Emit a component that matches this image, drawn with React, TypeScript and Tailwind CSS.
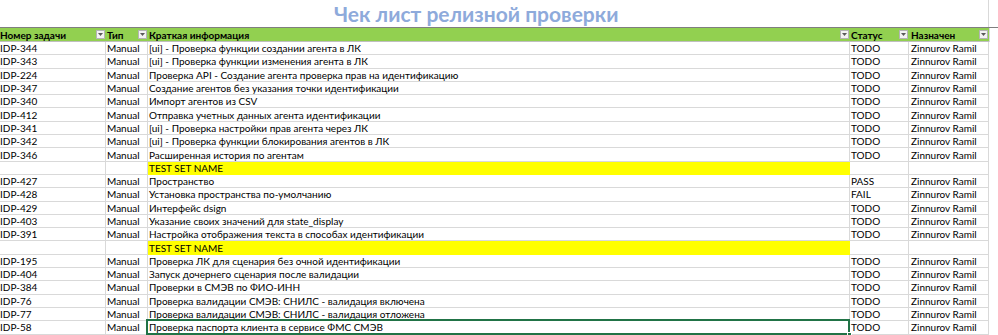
type Row = {
  id?: string
  type?: string
  info: string
  status?: string
  owner?: string
  section?: boolean
  selected?: boolean
}

const rows: Row[] = [
  { id: "IDP-344", type: "Manual", info: "[ui] - Проверка функции создании агента в ЛК", status: "TODO", owner: "Zinnurov Ramil" },
  { id: "IDP-343", type: "Manual", info: "[ui] - Проверка функции изменения агента в ЛК", status: "TODO", owner: "Zinnurov Ramil" },
  { id: "IDP-224", type: "Manual", info: "Проверка API - Создание агента проверка прав на идентификацию", status: "TODO", owner: "Zinnurov Ramil" },
  { id: "IDP-347", type: "Manual", info: "Создание агентов без указания точки идентификации", status: "TODO", owner: "Zinnurov Ramil" },
  { id: "IDP-340", type: "Manual", info: "Импорт агентов из CSV", status: "TODO", owner: "Zinnurov Ramil" },
  { id: "IDP-412", type: "Manual", info: "Отправка учетных данных агента идентификации", status: "TODO", owner: "Zinnurov Ramil" },
  { id: "IDP-341", type: "Manual", info: "[ui] - Проверка настройки прав агента через ЛК", status: "TODO", owner: "Zinnurov Ramil" },
  { id: "IDP-342", type: "Manual", info: "[ui] - Проверка функции блокирования агентов в ЛК", status: "TODO", owner: "Zinnurov Ramil" },
  { id: "IDP-346", type: "Manual", info: "Расширенная история по агентам", status: "TODO", owner: "Zinnurov Ramil" },
  { info: "TEST SET NAME", section: true },
  { id: "IDP-427", type: "Manual", info: "Пространство", status: "PASS", owner: "Zinnurov Ramil" },
  { id: "IDP-428", type: "Manual", info: "Установка пространства по-умолчанию", status: "FAIL", owner: "Zinnurov Ramil" },
  { id: "IDP-429", type: "Manual", info: "Интерфейс dsign", status: "TODO", owner: "Zinnurov Ramil" },
  { id: "IDP-403", type: "Manual", info: "Указание своих значений для state_display", status: "TODO", owner: "Zinnurov Ramil" },
  { id: "IDP-391", type: "Manual", info: "Настройка отображения текста в способах идентификации", status: "TODO", owner: "Zinnurov Ramil" },
  { info: "TEST SET NAME", section: true },
  { id: "IDP-195", type: "Manual", info: "Проверка ЛК для сценария без очной идентификации", status: "TODO", owner: "Zinnurov Ramil" },
  { id: "IDP-404", type: "Manual", info: "Запуск дочернего сценария после валидации", status: "TODO", owner: "Zinnurov Ramil" },
  { id: "IDP-384", type: "Manual", info: "Проверки в СМЭВ по ФИО-ИНН", status: "TODO", owner: "Zinnurov Ramil" },
  { id: "IDP-76", type: "Manual", info: "Проверка валидации СМЭВ: СНИЛС - валидация включена", status: "TODO", owner: "Zinnurov Ramil" },
  { id: "IDP-77", type: "Manual", info: "Проверка валидации СМЭВ: СНИЛС - валидация отложена", status: "TODO", owner: "Zinnurov Ramil" },
  { id: "IDP-58", type: "Manual", info: "Проверка паспорта клиента в сервисе ФМС СМЭВ", status: "TODO", owner: "Zinnurov Ramil", selected: true },
]

// excel autofilter dropdown
function FilterButton() {
  return (
    <div className="flex h-[9px] w-[9px] shrink-0 items-center justify-center border border-[#b4b4b4] bg-[#f3f3f3]">
      <svg width="5" height="3" viewBox="0 0 5 3">
        <polygon points="0,0 5,0 2.5,3" fill="#595959" />
      </svg>
    </div>
  )
}

function HeaderCell({ label, className }: { label: string; className: string }) {
  return (
    <div className={`flex h-[14px] items-center justify-between border-b border-[#bfbfbf] pr-[1px] ${className}`}>
      <span className="font-bold">{label}</span>
      <FilterButton />
    </div>
  )
}

export default function App() {
  return (
    <div className="h-[335px] w-[998px] overflow-hidden bg-white text-[10px] leading-none text-black [font-family:Lato,'Open_Sans',sans-serif]">
      <div className="-ml-[3px] flex h-[27px]">
        <div className="w-[992px] border-r border-[#d9d9d9] pl-[337px] pt-[1px] text-[21px] font-bold leading-[26px] text-[#8eaadb]">
          Чек лист релизной проверки
        </div>
      </div>

      <div className="-ml-[3px] flex border-t border-[#7f7f7f]">
        <HeaderCell label="Номер задачи" className="w-[109px] bg-[#92d050] pl-[3px]" />
        <HeaderCell label="Тип" className="w-[42px] bg-[#92d050] pl-[1px]" />
        <HeaderCell label="Краткая информация" className="w-[702px] bg-[#92d050] pl-[1px]" />
        <HeaderCell label="Статус" className="w-[59px] bg-[#92d050] pl-[1px]" />
        <HeaderCell label="Назначен" className="w-[80px] bg-[#92d050] pl-[2px]" />
        <div className="flex-1 border-l border-[#d9d9d9]" />
      </div>

      {rows.map((row, i) => (
        <div key={i} className="-ml-[3px] flex h-[13.3px]">
          <div className="flex w-[109px] items-center border-r border-b border-[#d9d9d9] pl-[3px]">{row.id}</div>
          <div className="flex w-[42px] items-center border-r border-b border-[#d9d9d9] pl-[1px]">{row.type}</div>
          <div
            className={`relative flex w-[702px] items-center border-r border-b pl-[1px] ${
              row.section ? "border-[#ffff00] bg-[#ffff00]" : "border-[#d9d9d9]"
            }`}
          >
            {row.info}
            {row.selected && (
              <>
                <div className="absolute -top-[2px] -left-[2px] -right-[1px] -bottom-[1px] border-2 border-[#217346]" />
                <div className="absolute -right-[3px] -bottom-[3px] h-[5px] w-[5px] border border-white bg-[#217346]" />
              </>
            )}
          </div>
          <div className="flex w-[59px] items-center border-r border-b border-[#d9d9d9] pl-[1px]">{row.status}</div>
          <div className="flex w-[80px] items-center border-r border-b border-[#d9d9d9] pl-[2px]">{row.owner}</div>
          <div className="flex-1" />
        </div>
      ))}
    </div>
  )
}
